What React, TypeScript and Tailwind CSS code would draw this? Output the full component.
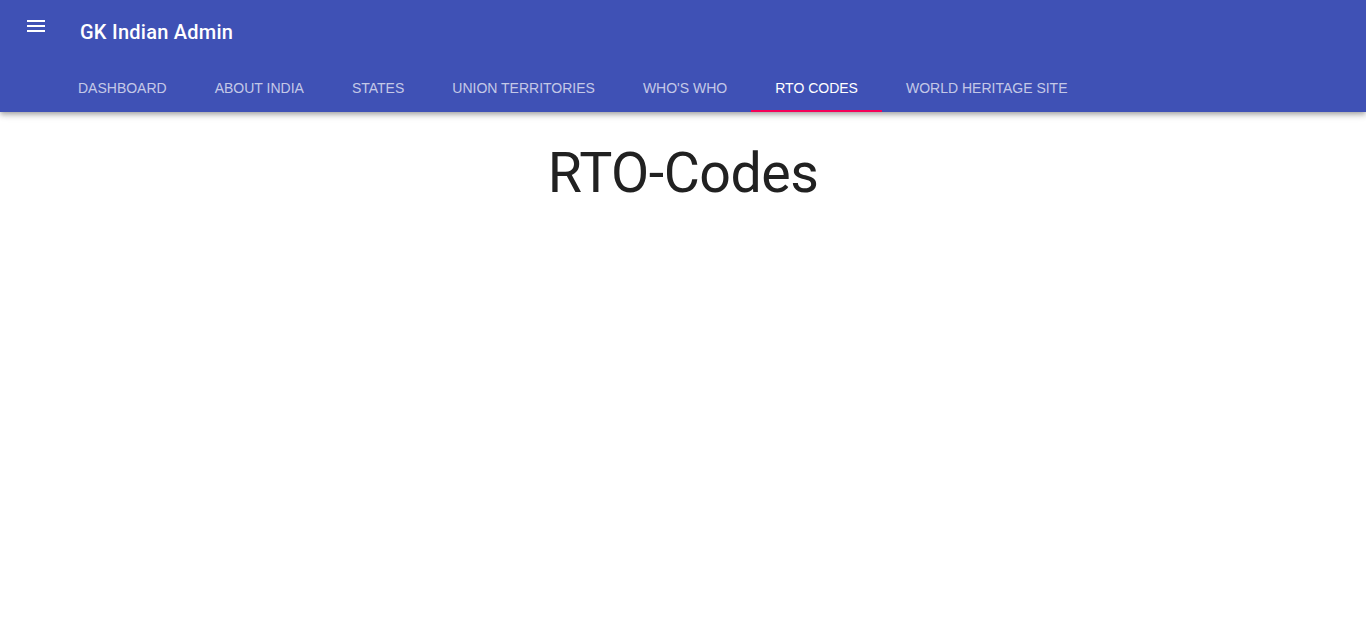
const TABS = ['Dashboard', 'About India', 'States', 'Union Territories', "Who's Who", 'RTO Codes', 'World Heritage Site']

function MenuIcon() {
  return (
    <svg viewBox="0 0 24 24" className="w-6 h-6 fill-white">
      <path d="M3 18h18v-2H3v2zm0-5h18v-2H3v2zm0-7v2h18V6H3z" />
    </svg>
  )
}

export default function App() {
  const active = 'RTO Codes'
  return (
    <div className="min-h-[643px] bg-white font-['Roboto',sans-serif]">
      <header className="bg-[#3f51b5] text-white shadow-[0_2px_4px_-1px_rgba(0,0,0,0.2),0_4px_5px_0_rgba(0,0,0,0.14),0_1px_10px_0_rgba(0,0,0,0.12)] relative z-10">
        <div className="h-16 flex items-center">
          <button className="w-6 h-6 ml-6 -mt-[12px]" aria-label="menu">
            <MenuIcon />
          </button>
          <h1 className="ml-8 text-[20px] font-medium leading-none tracking-[0.25px]">GK Indian Admin</h1>
        </div>
        <nav className="h-12 flex pl-[54px]">
          {TABS.map(t => (
            <div
              key={t}
              className={
                "relative px-6 flex items-center uppercase text-[14px] font-['Liberation_Sans',Arial,sans-serif] " +
                (t === active ? 'text-white' : 'text-white/70')
              }
            >
              {t}
              {t === active && <span className="absolute left-0 right-0 bottom-0 h-[2px] bg-[#f50057]" />}
            </div>
          ))}
        </nav>
      </header>
      <main className="flex justify-center pt-[34px]">
        <h2 className="text-[55.5px] font-normal leading-none text-[#212121] tracking-[-0.5px]">RTO-Codes</h2>
      </main>
    </div>
  )
}
